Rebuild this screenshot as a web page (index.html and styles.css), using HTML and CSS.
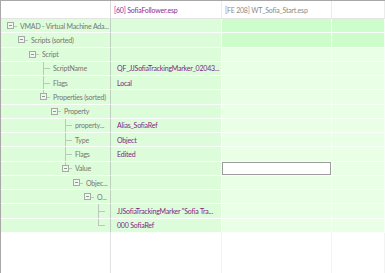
FILE: index.html
```html
<!DOCTYPE html>
<html lang="en">
<head>
  <meta charset="UTF-8">
  <title>VMAD compare</title>
  <link rel="stylesheet" href="styles.css">
</head>
<body>
  <div class="view">
    <div class="row head">
      <div class="cell c1"></div>
      <div class="cell c2 plugin">[60] SofiaFollower.esp</div>
      <div class="cell c3 other">[FE 208] WT_Sofia_Start.esp</div>
      <div class="cell c4"></div>
    </div>

    <div class="row hot">
      <div class="cell c1 lv0"><span class="exp"></span><span class="label">VMAD - Virtual Machine Ada...</span></div>
      <div class="cell c2"></div><div class="cell c3"></div><div class="cell c4"></div>
    </div>
    <div class="row hot">
      <div class="cell c1 lv1"><span class="exp"></span><span class="label">Scripts (sorted)</span></div>
      <div class="cell c2"></div><div class="cell c3"></div><div class="cell c4"></div>
    </div>
    <div class="row">
      <div class="cell c1 lv2"><span class="exp"></span><span class="label">Script</span></div>
      <div class="cell c2"></div><div class="cell c3"></div><div class="cell c4"></div>
    </div>
    <div class="row">
      <div class="cell c1 lv3"><span class="twig mid"></span><span class="label">ScriptName</span></div>
      <div class="cell c2 val">QF_JJSofiaTrackingMarker_02043...</div><div class="cell c3"></div><div class="cell c4"></div>
    </div>
    <div class="row">
      <div class="cell c1 lv3"><span class="twig mid"></span><span class="label">Flags</span></div>
      <div class="cell c2 val">Local</div><div class="cell c3"></div><div class="cell c4"></div>
    </div>
    <div class="row">
      <div class="cell c1 lv3"><span class="exp up"></span><span class="label">Properties (sorted)</span></div>
      <div class="cell c2"></div><div class="cell c3"></div><div class="cell c4"></div>
    </div>
    <div class="row">
      <div class="cell c1 lv4"><span class="exp"></span><span class="label">Property</span></div>
      <div class="cell c2"></div><div class="cell c3"></div><div class="cell c4"></div>
    </div>
    <div class="row">
      <div class="cell c1 lv5"><span class="twig mid"></span><span class="label">property...</span></div>
      <div class="cell c2 val">Alias_SofiaRef</div><div class="cell c3"></div><div class="cell c4"></div>
    </div>
    <div class="row">
      <div class="cell c1 lv5"><span class="twig mid"></span><span class="label">Type</span></div>
      <div class="cell c2 val">Object</div><div class="cell c3"></div><div class="cell c4"></div>
    </div>
    <div class="row">
      <div class="cell c1 lv5"><span class="twig mid"></span><span class="label">Flags</span></div>
      <div class="cell c2 val">Edited</div><div class="cell c3"></div><div class="cell c4"></div>
    </div>
    <div class="row">
      <div class="cell c1 lv5"><span class="exp up"></span><span class="label">Value</span></div>
      <div class="cell c2"></div><div class="cell c3"><div class="editor"></div></div><div class="cell c4"></div>
    </div>
    <div class="row">
      <div class="cell c1 lv6"><span class="exp"></span><span class="label">Objec...</span></div>
      <div class="cell c2"></div><div class="cell c3"></div><div class="cell c4"></div>
    </div>
    <div class="row">
      <div class="cell c1 lv7"><span class="exp"></span><span class="label">O...</span></div>
      <div class="cell c2"></div><div class="cell c3"></div><div class="cell c4"></div>
    </div>
    <div class="row">
      <div class="cell c1 lv8"><span class="twig mid"></span></div>
      <div class="cell c2 val">JJSofiaTrackingMarker "Sofia Tra...</div><div class="cell c3"></div><div class="cell c4"></div>
    </div>
    <div class="row">
      <div class="cell c1 lv8"><span class="twig end"></span></div>
      <div class="cell c2 val">000 SofiaRef</div><div class="cell c3"></div><div class="cell c4"></div>
    </div>

    <div class="row fill">
      <div class="cell c1"></div><div class="cell c2"></div><div class="cell c3"></div><div class="cell c4"></div>
    </div>
  </div>
</body>
</html>
```

FILE: styles.css
```css
html, body {
  margin: 0;
  height: 100%;
  overflow: hidden;
  background: #fff;
}
body {
  font-family: Lato, "Liberation Sans", sans-serif;
  font-size: 7px;
  letter-spacing: -0.2px;
  color: #767676;
}
.view {
  height: 100%;
  display: flex;
  flex-direction: column;
  border-left: 1px solid #a8a8a8;
  border-top: 1px solid #a8a8a8;
  box-sizing: border-box;
}
.row {
  display: grid;
  grid-template-columns: 110px 111px 110px 1fr;
  height: 14.27px;
  flex: none;
}
.cell {
  box-sizing: border-box;
  display: flex;
  align-items: center;
  white-space: nowrap;
  overflow: hidden;
  border-bottom: 1px solid #fbfffb;
  border-right: 1px solid #f6fff6;
}
.c1, .c2 {
  background: #ddfcda;
}
.c1 {
  border-right-color: #bfcfbf;
}
.c3, .c4 {
  background: #e9ffe6;
}
.hot .c3, .hot .c4 {
  background: #cdfdca;
}
.c2 {
  padding-left: 6px;
}
.val {
  color: #7f1f86;
}

/* header */
.head {
  height: 18px;
}
.head .cell {
  background: #fff;
  border-bottom: 1px solid #e4e4e4;
  border-right-color: #ececec;
  padding-left: 3px;
}
.head .c1 {
  border-right-color: #d8d8d8;
}
.plugin {
  color: #8c2a98;
}
.other {
  color: #8a8a8a;
}

/* empty area below the tree */
.fill {
  flex: 1;
  height: auto;
}
.fill .cell {
  background: #fff;
  border-bottom: none;
  border-right-color: #f3f3f3;
}
.fill .c1 {
  border-right-color: #e2e2e2;
}

/* tree indent */
.lv0 { padding-left: 6px; }
.lv1 { padding-left: 17px; }
.lv2 { padding-left: 28px; }
.lv3 { padding-left: 39px; }
.lv4 { padding-left: 50px; }
.lv5 { padding-left: 61px; }
.lv6 { padding-left: 72px; }
.lv7 { padding-left: 83px; }
.lv8 { padding-left: 94px; }

.twig, .exp {
  flex: none;
  width: 12px;
  height: 100%;
  position: relative;
}
.twig::before {
  content: "";
  position: absolute;
  left: 3px;
  top: 0;
  width: 1px;
  height: 100%;
  background: #bcc8bc;
}
.twig.end::before {
  height: 50%;
}
.twig::after {
  content: "";
  position: absolute;
  left: 3px;
  top: 50%;
  width: 7px;
  height: 1px;
  background: #bcc8bc;
}
.exp::before {
  content: "";
  position: absolute;
  left: 0;
  top: calc(50% - 3.5px);
  width: 7px;
  height: 7px;
  box-sizing: border-box;
  border: 1px solid #a3aca3;
  background: linear-gradient(#8e968e, #8e968e) center / 3px 1px no-repeat, #f2f6f2;
}
.exp::after {
  content: "";
  position: absolute;
  left: 7px;
  top: 50%;
  width: 3px;
  height: 1px;
  background: #bcc8bc;
}
.exp.up {
  background: linear-gradient(#bcc8bc, #bcc8bc) 3px 0 / 1px 50% no-repeat;
}
.label {
  padding-left: 1px;
}

/* inline value editor */
.c3 .editor {
  width: 100%;
  height: 100%;
  box-sizing: border-box;
  background: #fff;
  border: 1px solid #9c9c9c;
}
.row .c3:has(.editor) {
  border-right-color: #fff;
}
```
